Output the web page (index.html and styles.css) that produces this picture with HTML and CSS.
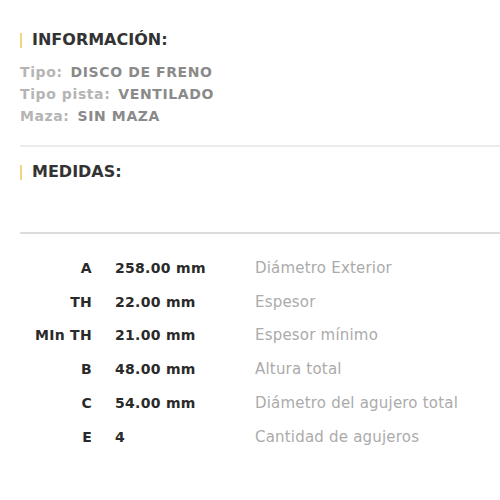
FILE: index.html
```html
<!DOCTYPE html>
<html>
<head>
<meta charset="utf-8">
<link rel="stylesheet" href="styles.css">
</head>
<body>
<div class="page">
  <section class="info">
    <h2 class="title">INFORMACIÓN:</h2>
    <div class="info-rows">
      <div class="info-row"><span class="k">Tipo:</span><span class="v">DISCO DE FRENO</span></div>
      <div class="info-row"><span class="k">Tipo pista:</span><span class="v">VENTILADO</span></div>
      <div class="info-row"><span class="k">Maza:</span><span class="v">SIN MAZA</span></div>
    </div>
  </section>
  <hr class="sep-light">
  <section class="measures">
    <h2 class="title">MEDIDAS:</h2>
  </section>
  <hr class="sep">
  <div class="table">
    <div class="row"><span class="lbl">A</span><span class="val">258.00 mm</span><span class="desc">Diámetro Exterior</span></div>
    <div class="row"><span class="lbl">TH</span><span class="val">22.00 mm</span><span class="desc">Espesor</span></div>
    <div class="row"><span class="lbl">MIn TH</span><span class="val">21.00 mm</span><span class="desc">Espesor mínimo</span></div>
    <div class="row"><span class="lbl">B</span><span class="val">48.00 mm</span><span class="desc">Altura total</span></div>
    <div class="row"><span class="lbl">C</span><span class="val">54.00 mm</span><span class="desc">Diámetro del agujero total</span></div>
    <div class="row"><span class="lbl">E</span><span class="val">4</span><span class="desc">Cantidad de agujeros</span></div>
  </div>
</div>
</body>
</html>
```
FILE: styles.css
```css
* { box-sizing: border-box; }
body {
  margin: 0;
  background: #fff;
  font-family: "DejaVu Sans", "Lato", sans-serif;
}
.page {
  padding: 28px 0 0 20px;
}
.title {
  margin: 0;
  display: flex;
  align-items: center;
  gap: 10px;
  font-size: 16px;
  font-weight: 700;
  color: #333;
  line-height: 24px;
}
.title::before {
  content: "";
  width: 2px;
  height: 15px;
  background: #f2d580;
}
.info-rows {
  margin-top: 9px;
  display: flex;
  flex-direction: column;
}
.info-row {
  display: flex;
  gap: 8px;
  font-size: 14px;
  font-weight: 700;
  line-height: 22px;
  letter-spacing: 0.6px;
}
.info-row .k { color: #b5b5b5; }
.info-row .v { color: #8a8a8a; }
.sep-light {
  margin: 18px 0 0;
  border: 0;
  height: 2px;
  background: #ececec;
}
.measures {
  padding-top: 13px;
}
.sep {
  margin: 48px 0 0;
  border: 0;
  height: 2px;
  background: #dcdcdc;
}
.table {
  padding-top: 17px;
  display: flex;
  flex-direction: column;
}
.row {
  display: grid;
  grid-template-columns: 72px 117px 1fr;
  column-gap: 23px;
  height: 33.8px;
  align-items: center;
  font-size: 14px;
  letter-spacing: 0.3px;
}
.lbl {
  text-align: right;
  font-weight: 700;
  color: #2a2a2a;
}
.val {
  font-weight: 700;
  color: #2a2a2a;
}
.desc {
  font-size: 15px;
  letter-spacing: 0.2px;
  color: #ababab;
}
```
